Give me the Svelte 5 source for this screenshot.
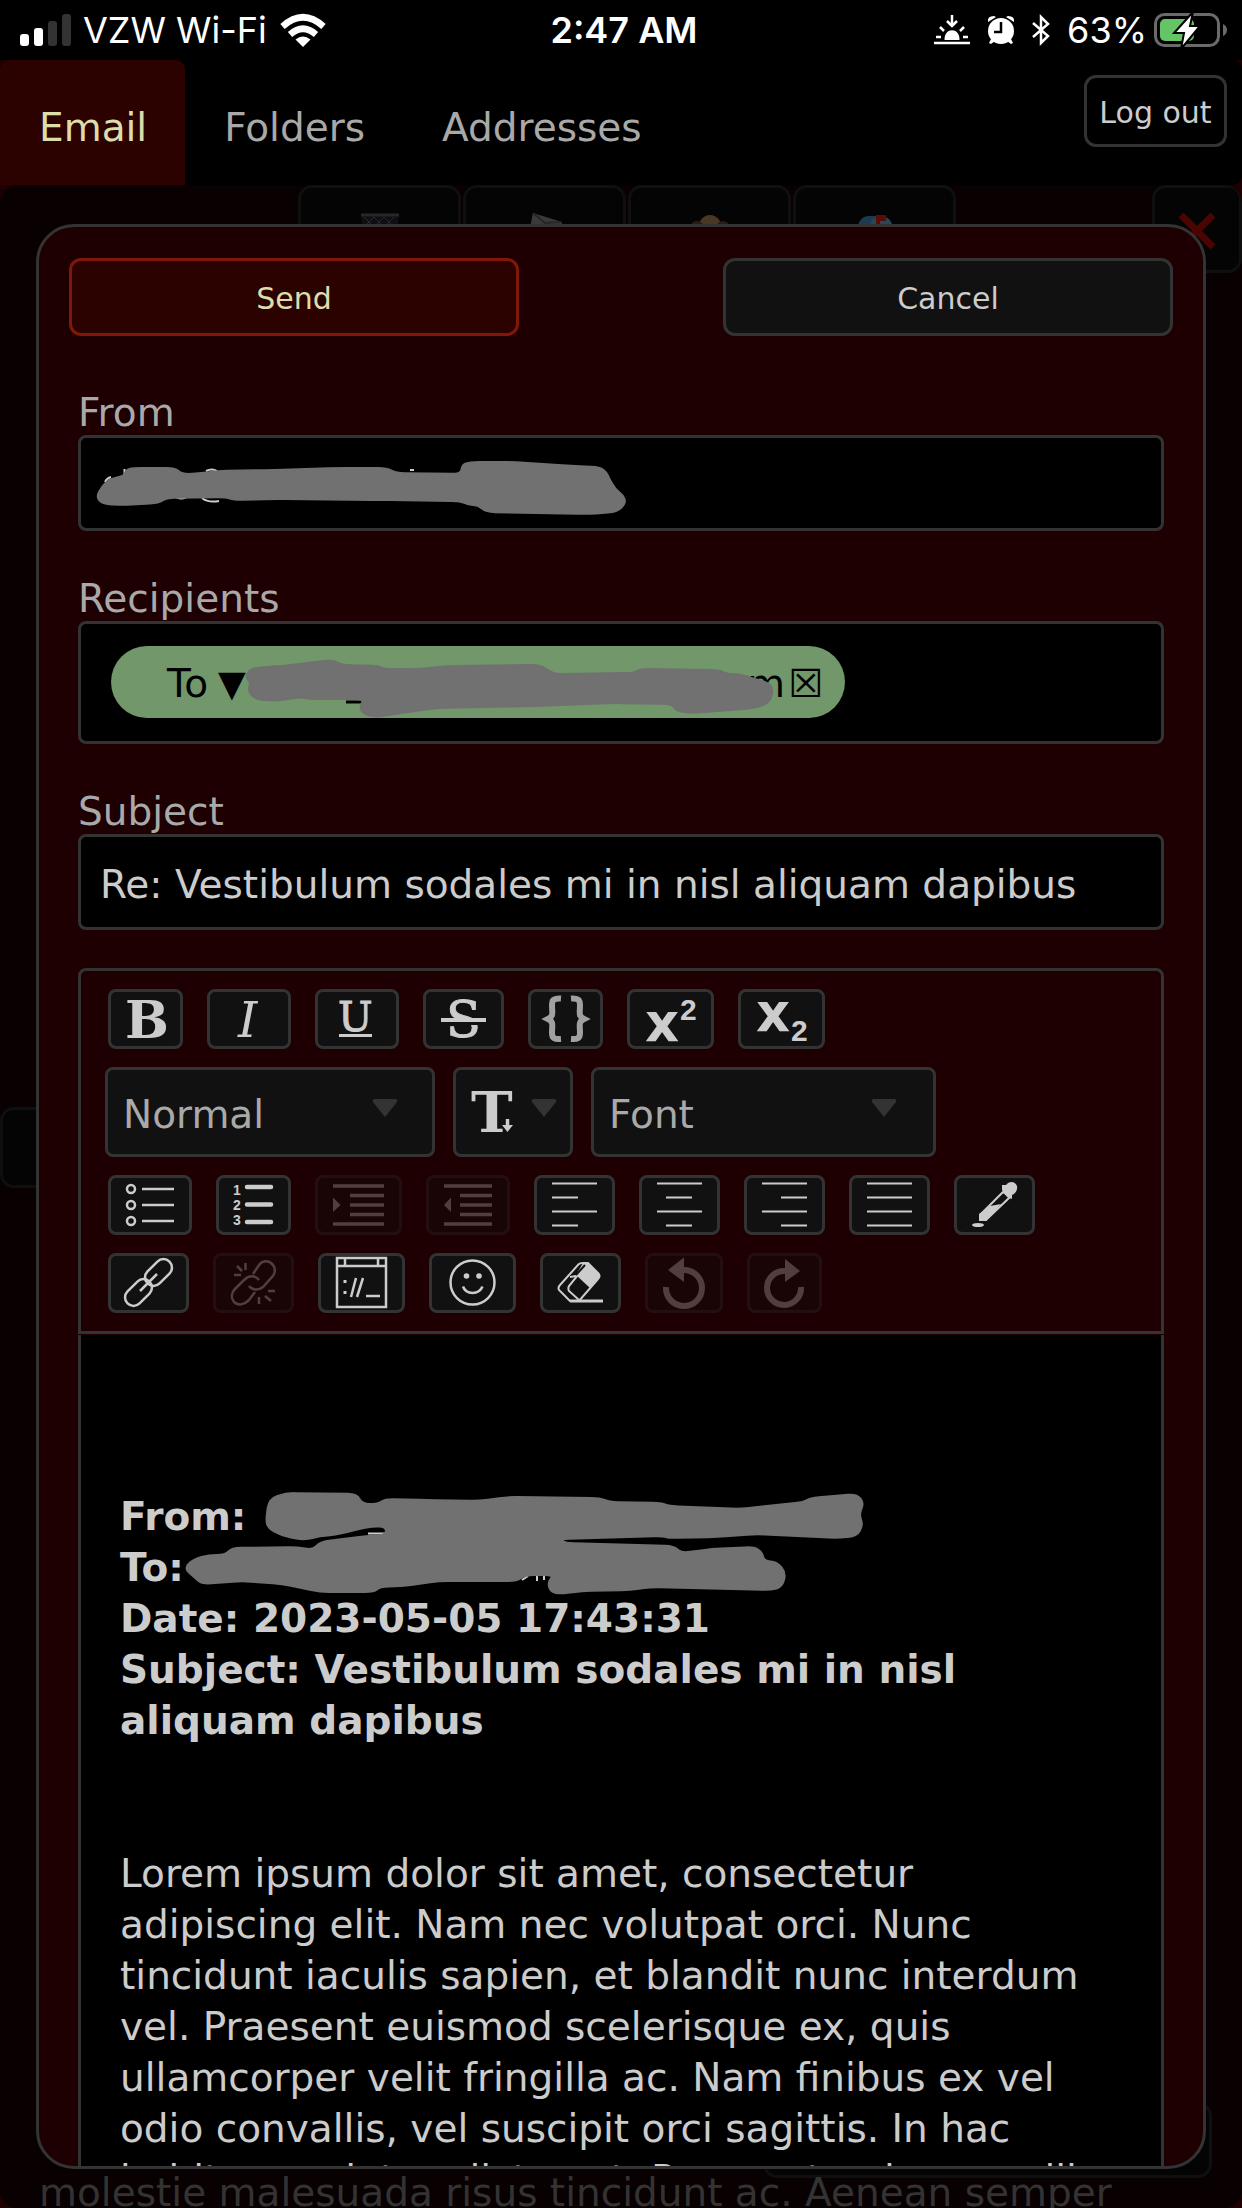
<script>
  const alignLines = (shortX) =>
    `<path d="M18 8.5H63M${shortX} 22.5h26M18 36.5H63M${shortX} 50.5h26" stroke-width="2"/>`;

  // Closed outline through the given points, each corner rounded by up to 9px.
  function outline(source) {
    const n = source.trim().split(/[\s,]+/).map(Number);
    const pts = [];
    for (let i = 0; i < n.length; i += 2) pts.push([n[i], n[i + 1]]);
    const toward = (a, b) => {
      const len = Math.hypot(b[0] - a[0], b[1] - a[1]);
      const t = Math.min(0.5, 9 / len);
      return `${a[0] + (b[0] - a[0]) * t} ${a[1] + (b[1] - a[1]) * t}`;
    };
    return pts
      .map((p, i) => {
        const prev = pts[(i + pts.length - 1) % pts.length];
        const next = pts[(i + 1) % pts.length];
        return `${i ? 'L' : 'M'}${toward(p, prev)}Q${p[0]} ${p[1]} ${toward(p, next)}`;
      })
      .join('') + 'Z';
  }

  const blots = {
    from: outline('96 497 103 485 110 479 124 476 126 470 133 468 175 468 182 474 195 474 218 471 274 470 337 468 387 468 396 473 461 474 462 465 470 462 515 462 571 466 600 467 607 473 609 478 615 489 623 495 626 503 617 512 587 514 486 512 478 505 468 505 461 501 381 500 274 499 234 500 226 497 166 498 159 503 123 505 103 504'),
    recipient: outline('245 676 252 668 282 666 333 660 342 665 379 666 384 669 420 669 448 666 541 665 553 674 634 673 640 669 720 670 726 674 740 674 754 679 769 683 773 690 770 702 756 708 692 713 676 711 672 704 614 703 535 706 436 708 374 717 362 713 360 706 364 699 309 699 302 697 274 701 254 699 248 690 251 683'),
    message: outline('266 1520 269 1499 286 1493 357 1494 362 1504 378 1504 385 1499 427 1500 479 1501 508 1497 600 1498 609 1502 661 1503 669 1506 740 1509 804 1502 810 1498 857 1494 864 1503 859 1514 863 1525 857 1536 838 1538 756 1534 717 1537 669 1538 663 1536 560 1539 565 1543 674 1546 681 1553 712 1549 754 1547 762 1552 764 1561 777 1562 786 1573 782 1587 771 1590 651 1587 630 1590 582 1591 559 1594 550 1591 548 1582 554 1575 525 1575 517 1581 439 1581 404 1586 380 1587 374 1592 320 1592 282 1584 242 1581 202 1584 194 1577 184 1568 194 1559 209 1555 225 1555 232 1548 297 1547 313 1550 320 1542 366 1536 386 1535 386 1527 374 1526 355 1530 335 1535 320 1536 305 1540 282 1536 268 1528')
  };

  const rows = {
    inline: [
      { label: 'Bold', w: 75, icon: '<text x="17" y="49" font-family="DejaVu Serif, serif" font-weight="700" font-size="52">B</text>' },
      { label: 'Italic', w: 84, icon: '<text x="31" y="48" font-family="DejaVu Serif, serif" font-style="italic" font-size="49">I</text>' },
      { label: 'Underline', w: 84, icon: '<text x="23" y="42" font-family="DejaVu Serif, serif" font-size="41" class="heavy">U</text><path d="M24 46.500H57" stroke-width="3"/>' },
      { label: 'Strikethrough', w: 81, icon: '<text x="23" y="48" font-family="DejaVu Serif, serif" font-size="51" class="heavy">S</text><path d="M18 34.500H63" stroke="#111" stroke-width="3"/><path d="M18 31H63" stroke-width="4"/>' },
      { label: 'Code', w: 75, icon: '<path d="M33 9.500C26 9 24 11 24 16C24 24 26 27 20 30C26 33 24 36 24 44C24 49 26 50.500 33 50M43 9.500C50 9 52 11 52 16C52 24 50 27 56 30C50 33 52 36 52 44C52 49 50 50.500 43 50" stroke="#a0a0a0" stroke-width="6"/>' },
      { label: 'Superscript', w: 87, icon: '<text x="18" y="52" font-family="DejaVu Sans, sans-serif" font-weight="700" font-size="53">x</text><text x="53" y="31" font-family="Liberation Sans, sans-serif" font-weight="700" font-size="30">2</text>' },
      { label: 'Subscript', w: 87, icon: '<text x="18" y="42" font-family="DejaVu Sans, sans-serif" font-weight="700" font-size="53">x</text><text x="53" y="52" font-family="Liberation Sans, sans-serif" font-weight="700" font-size="30">2</text>' }
    ],
    block: [
      { label: 'Bulleted list', w: 84, icon: '<circle cx="23" cy="14" r="4"/><circle cx="23" cy="30" r="4"/><circle cx="23" cy="46" r="4"/><path d="M34 14H66M34 30H66M34 46H66"/>' },
      { label: 'Numbered list', w: 75, icon: '<text x="17" y="20" font-family="Liberation Sans, sans-serif" font-weight="700" font-size="14">1</text><text x="17" y="35" font-family="Liberation Sans, sans-serif" font-weight="700" font-size="14">2</text><text x="17" y="50" font-family="Liberation Sans, sans-serif" font-weight="700" font-size="14">3</text><path d="M31 12H55M31 29.500H55M31 47H55" stroke-width="4.500" stroke-linecap="round"/>' },
      { label: 'Indent', w: 87, disabled: true, icon: '<path d="M18 11H69M35 20.500H69M35 30H69M35 39.500H69M18 49H69" stroke-width="3.500"/><path d="M18 22.500L25.500 30L18 37Z" class="solid"/>' },
      { label: 'Outdent', w: 84, disabled: true, icon: '<path d="M18 11H66M34 20.500H66M34 30H66M34 39.500H66M18 49H66" stroke-width="3.500"/><path d="M25 22.500L18 30L25 37Z" class="solid"/>' },
      { label: 'Align left', w: 81, icon: alignLines(18) },
      { label: 'Align center', w: 81, icon: alignLines(27) },
      { label: 'Align right', w: 81, icon: alignLines(37) },
      { label: 'Justify', w: 81, icon: '<path d="M18 8.500H63M18 22.500H63M18 36.500H63M18 50.500H63" stroke-width="2"/>' },
      { label: 'Color picker', w: 81, icon: '<path d="M49 17L26 40V45H32L56 22Z" stroke-width="2"/><path d="M36 31L47 29L32 46H25V39Z" class="solid"/><path d="M48 10L52 10C55 6 61 6 63 11C64 15 61 19 58 20V24L53 22L48 15Z" class="solid"/><ellipse cx="24" cy="50" rx="6" ry="2" class="solid"/>' }
    ],
    insert: [
      { label: 'Insert link', w: 81, icon: '<rect x="-15.500" y="-8.500" width="31" height="17" rx="8.500" transform="translate(30.500 39.500) rotate(-45)"/><rect x="-15.500" y="-8.500" width="31" height="17" rx="8.500" transform="translate(50.500 19.500) rotate(-45)"/><path d="M32 38L49 21"/>' },
      { label: 'Remove link', w: 81, disabled: true, icon: '<path d="M40 21L46 12C50 7 56 7 60 12C63 16 62 21 59 24L50 34C45 38 39 37 36 33"/><path d="M42 39L36 47C31 52 25 53 21 49C18 45 18 40 22 36L31 27C36 22 42 22 46 27"/><path d="M24 13L29 18M32.500 10V17M21 22H28M55 38H62M52 43L58 48M46 44V51" stroke-width="2.500"/>' },
      { label: 'Embed code', w: 87, icon: '<rect x="19" y="5" width="49" height="49"/><path d="M19 13H68M27 5V13M60 5V13M38 25L33 44M45 25L39 44M48 43H62"/><path d="M27 27v3M27 38v3" stroke-width="3"/>' },
      { label: 'Emoji', w: 87, icon: '<circle cx="43.500" cy="29.500" r="22"/><circle cx="37.500" cy="23" r="2.800" class="solid"/><circle cx="50" cy="23" r="2.800" class="solid"/><path d="M34 33.500C37 42 50 42 53.500 33.500"/>' },
      { label: 'Clear formatting', w: 81, icon: '<path d="M30 48L19 37C18 35 18 34 20 32L38 12C39 10 41 10 43 10H48L58 20C60 22 60 24 58 26L39 48Z" stroke-width="2"/><path d="M43 10H48L58 20C60 22 60 24 58 26L50 35L36 22Z" class="solid"/><path d="M46 12L29 33C28 35 28 36 29 38L39 47M36 23L30 24" stroke-width="2"/><path d="M45 12L36 22" stroke="#111" stroke-width="2"/><path d="M30 48H63" stroke-width="3"/>' },
      { label: 'Undo', w: 78, disabled: true, icon: '<path d="M21 34A18 18 0 1 0 39 17" stroke-width="6"/><path d="M23 17L39 4.500V29Z" class="solid"/>' },
      { label: 'Redo', w: 75, disabled: true, icon: '<path d="M54 34A17 17 0 1 1 38 18" stroke-width="6"/><path d="M53 18L38 6V29Z" class="solid"/>' }
    ]
  };

  let subject = $state('Re: Vestibulum sodales mi in nisl aliquam dapibus');
</script>

{#snippet toolRow(tools)}
  <div class="tools">
    {#each tools as t}
      <button type="button" class="tool" aria-label={t.label} disabled={t.disabled}>
        <svg class="icon" width={t.w - 6} height="54" viewBox="3 3 {t.w - 6} 54">{@html t.icon}</svg>
      </button>
    {/each}
  </div>
{/snippet}

{#snippet caret()}
  <svg class="caret" width="26" height="18" viewBox="0 0 26 18"><path d="M3 0H23Q26 0 25 3L13 18L1 3Q0 0 3 0Z" /></svg>
{/snippet}

<div class="screen">
  <header class="status">
    <div class="side">
      <svg width="51" height="32" viewBox="0 0 51 32">
        <rect y="20" width="9" height="12" rx="3" fill="#fff" />
        <rect x="14" y="14" width="9" height="18" rx="3" fill="#fff" />
        <rect x="28" y="7" width="9" height="25" rx="3" fill="#333" />
        <rect x="42" width="9" height="32" rx="3" fill="#333" />
      </svg>
      <span class="carrier">VZW Wi-Fi</span>
      <svg width="46" height="33" viewBox="0 0 46 33" fill="none" stroke="#fff" stroke-width="6.500">
        <path d="M2.500 12.500Q23-6 43.500 12.500" />
        <path d="M10 20.500Q23 9 36 20.500" />
        <path d="M23 33L15.500 25.500Q23 19.500 30.500 25.500Z" fill="#fff" stroke="none" />
      </svg>
    </div>
    <time>2:47 AM</time>
    <div class="side end">
      <svg class="sunset" width="36" height="30" viewBox="0 0 36 30" fill="none" stroke="#fff" stroke-width="2.500">
        <path d="M0 28H36M2 22H7M29 22H34M6 12L10 16M30 12L26 16M18 0V11M13 6L18 11L23 6" />
        <path d="M10.500 25C10 12 26 12 25.500 25Z" fill="#fff" stroke="none" />
      </svg>
      <svg class="alarm" width="28" height="30" viewBox="0 0 28 30">
        <circle cx="14" cy="16" r="13" fill="#fff" />
        <path d="M1 7Q0 1 7 1L9 2ZM27 7Q28 1 21 1L19 2ZM4 24L2 28L4 29L8 26ZM24 24L26 28L24 29L20 26Z" fill="#fff" />
        <path d="M14 7V17H7" fill="none" stroke="#000" stroke-width="2.500" />
      </svg>
      <svg class="bluetooth" width="18" height="30" viewBox="0 0 18 30" fill="none" stroke="#fff" stroke-width="2.500">
        <path d="M1 8L16 21L9 28V2L16 9L1 22" />
      </svg>
      <span>63%</span>
      <svg class="battery" width="74" height="36" viewBox="0 0 74 36">
        <rect x="1.500" y="2.500" width="63" height="31" rx="9" fill="none" stroke="#6a6a6a" stroke-width="3" />
        <path d="M69 12Q73 14 73 18T69 24Z" fill="#6a6a6a" />
        <rect x="6" y="7" width="34" height="22" rx="5" fill="#65c466" />
        <path d="M39 0L20 21H30L27 37L46 14H36Z" fill="#fff" stroke="#000" stroke-width="2" />
      </svg>
    </div>
  </header>

  <nav class="nav">
    <a class="tab active" href="#email">Email</a>
    <a class="tab" href="#folders">Folders</a>
    <a class="tab" href="#addresses">Addresses</a>
    <button class="logout">Log out</button>
  </nav>

  <main class="main">
    <div class="behind" inert>
      <div class="behind-bar">
        <div class="behind-actions">
          <button class="dim" aria-label="Delete">
            <svg width="40" height="60" viewBox="0 0 40 60"><path d="M1 2H39L34 58H6Z" fill="#0e0f12" /><path d="M1 3H39" stroke="#25272b" stroke-width="3" /><path d="M4 5L14 15M14 5L24 15M24 5L34 15M14 5L4 15M24 5L14 15M34 5L24 15" stroke="#2a2a2c" /></svg>
          </button>
          <button class="dim" aria-label="Mark read">
            <svg width="40" height="60" viewBox="0 0 40 60"><path d="M8 1L37 10L32 40L2 30Z" fill="#3a3a3a" /><path d="M8 1L20 11L36 10" fill="none" stroke="#262626" stroke-width="2" /></svg>
          </button>
          <button class="dim" aria-label="Mark spam">
            <svg width="40" height="60" viewBox="0 0 40 60"><ellipse cx="20" cy="20" rx="13" ry="17" fill="#4a3826" /><circle cx="7" cy="16" r="7" fill="#2c1b10" /><circle cx="33" cy="16" r="7" fill="#2c1b10" /></svg>
          </button>
          <button class="dim" aria-label="Move">
            <svg width="40" height="60" viewBox="0 0 40 60"><rect x="3" y="4" width="34" height="26" rx="11" fill="#1c3a52" /><rect x="15" y="5" width="22" height="25" rx="9" fill="#2b4656" /><path d="M21 3H31V9H25V20H21Z" fill="#5a0d06" /></svg>
          </button>
        </div>
        <button class="dim close" aria-label="Close">
          <svg width="38" height="38" viewBox="0 0 38 38"><path d="M3 3L35 35M35 3L3 35" stroke="#4a0502" stroke-width="7" /></svg>
        </button>
      </div>
      <button class="dim side-handle" aria-label="Previous"></button>
      <button class="dim corner-button" aria-label="Reply"></button>
      <p class="behind-text">molestie malesuada risus tincidunt ac. Aenean semper</p>
    </div>

    <form class="dialog" onsubmit={(e) => e.preventDefault()}>
      <div class="actions">
        <button class="action send">Send</button>
        <button class="action" type="button">Cancel</button>
      </div>

      <div class="fields">
        <label for="from">From</label>
        <div class="field">
          <input id="from" type="text" />
          <svg class="ink" width="1080" height="90" viewBox="81 438 1080 90">
            <path class="trace" d="M105 482Q107 478 111 477M124.500 469V474M166 498H170M176 497Q182 500 187 497M202 498Q208 503 219 501M206 471Q212 468 217 471M410 470H414" />
            <path class="blot" d={blots.from} />
          </svg>
        </div>

        <label for="recipients">Recipients</label>
        <div class="field recipients" id="recipients">
          <div class="pill">
            <button type="button" class="plain kind"><span>To</span><span>▼</span></button>
            <span class="domain">m</span>
            <button type="button" class="plain" aria-label="Remove recipient">☒</button>
          </div>
          <svg class="ink" width="1080" height="117" viewBox="81 624 1080 117">
            <path d="M346 702H364" stroke="#000" stroke-width="3" />
            <path class="blot" d={blots.recipient} />
          </svg>
        </div>

        <label for="subject">Subject</label>
        <div class="field"><input id="subject" type="text" bind:value={subject} /></div>

        <div class="toolbar">
          {@render toolRow(rows.inline)}
          <div class="pickers">
            <div class="picker block-type">
              <select aria-label="Block type"><option>Normal</option></select>
              {@render caret()}
            </div>
            <button type="button" class="picker size" aria-label="Font size" aria-haspopup="listbox">
              <svg class="icon" width="60" height="84" viewBox="3 3 60 84">
                <text x="18" y="65" font-family="DejaVu Serif, serif" font-weight="700" font-size="56">T</text>
                <path d="M54.500 52V60" stroke-width="3.500" />
                <path d="M49 58H60L54.500 65Z" class="solid" />
              </svg>
              {@render caret()}
            </button>
            <div class="picker family">
              <select aria-label="Font"><option>Font</option></select>
              {@render caret()}
            </div>
          </div>
          {@render toolRow(rows.block)}
          {@render toolRow(rows.insert)}
        </div>

        <div class="body" contenteditable="true" role="textbox" aria-label="Message" aria-multiline="true" tabindex="0">
          <p class="quoted">From:<br />To:<br />Date: 2023-05-05 17:43:31<br />Subject: Vestibulum sodales mi in nisl aliquam dapibus</p>
          <p>Lorem ipsum dolor sit amet, consectetur adipiscing elit. Nam nec volutpat orci. Nunc tincidunt iaculis sapien, et blandit nunc interdum vel. Praesent euismod scelerisque ex, quis ullamcorper velit fringilla ac. Nam finibus ex vel odio convallis, vel suscipit orci sagittis. In hac habitasse platea dictumst. Praesent quis convallis</p>
          <svg class="ink" width="1080" height="300" viewBox="81 1335 1080 300">
            <path class="trace" d="M368 1533.500H385M522 1580L528 1576M537 1575V1581M544 1575V1580" />
            <path class="blot" d={blots.message} />
          </svg>
        </div>
      </div>
    </form>
  </main>
</div>

<style>
  :global(body) {
    background: #1e0002;
  }
  .screen {
    height: 100vh;
    display: flex;
    flex-direction: column;
    overflow: hidden;
    font: 39px/51px "DejaVu Sans", Verdana, sans-serif;
    color: #ccc;
  }
  .screen :is(button, input, select) {
    font: inherit;
    color: inherit;
    box-sizing: border-box;
    margin: 0;
    padding: 0;
  }
  svg {
    display: block;
    flex: none;
    overflow: visible;
  }

  .status {
    flex: none;
    height: 60px;
    display: grid;
    grid-template-columns: 1fr auto 1fr;
    align-items: center;
    padding: 0 14px 0 20px;
    background: #000;
    color: #fff;
    font: 36px/60px Inter, sans-serif;
  }
  .status time {
    font-weight: 600;
  }
  .side {
    display: flex;
    align-items: center;
  }
  .carrier {
    margin: 0 13px 0 12px;
  }
  .end {
    justify-content: flex-end;
  }
  .sunset, .alarm, .bluetooth {
    margin-right: 17px;
  }
  .battery {
    margin-left: 7px;
  }

  .nav {
    flex: none;
    height: 125px;
    display: flex;
    align-items: stretch;
    background: #000;
    border-radius: 9px;
  }
  .tab {
    display: flex;
    align-items: center;
    padding: 9px 38px 0 39px;
    color: #a9a9a9;
    text-decoration: none;
  }
  .active {
    background: #2b0200;
    color: #dda;
    border-radius: 9px 9px 0 0;
  }
  .screen .logout {
    margin: 15px 15px 0 auto;
    padding-top: 2px;
    width: 143px;
    height: 72px;
    border: 3px solid #333;
    border-radius: 12px;
    background: #000;
    font-size: 30px;
  }

  .main {
    flex: 1;
    position: relative;
    min-height: 0;
  }
  .behind {
    height: 100%;
    position: relative;
    background: #080001;
    border-radius: 18px;
    overflow: hidden;
  }
  .behind-bar {
    display: flex;
    justify-content: space-between;
    padding-left: 298px;
  }
  .behind-actions {
    display: flex;
    gap: 2px;
  }
  .dim {
    width: 163px;
    height: 88px;
    display: flex;
    justify-content: center;
    border: 3px solid #0f0f0f;
    border-radius: 14px;
    background: #040404;
  }
  .screen .behind-bar .dim {
    padding-top: 24px;
  }
  .behind-bar .close {
    width: 90px;
  }
  .side-handle {
    position: absolute;
    left: 0;
    top: 922px;
    height: 81px;
  }
  .corner-button {
    position: absolute;
    right: 30px;
    bottom: 30px;
    width: 449px;
    height: 76px;
  }
  .behind-text {
    position: absolute;
    left: 39px;
    bottom: -10px;
    margin: 0;
    color: #333;
    white-space: nowrap;
  }

  .dialog {
    position: absolute;
    inset: 39px 36px;
    display: flex;
    flex-direction: column;
    box-sizing: border-box;
    padding: 31px 30px 0;
    border: 3px solid #333;
    border-radius: 38px;
    background: #1e0002;
    overflow: hidden;
  }
  .actions {
    flex: none;
    display: flex;
    justify-content: space-between;
    gap: 24px;
  }
  .action {
    flex: 0 1 450px;
    height: 78px;
    border: 3px solid #333;
    border-radius: 12px;
    background: #111;
  }
  .screen .action {
    padding-top: 2px;
    font-size: 30px;
  }
  .screen .send {
    border-color: #81160b;
    background: #2b0200;
    color: #dda;
  }

  .fields {
    flex: 1;
    min-height: 0;
    display: flex;
    flex-direction: column;
    padding: 54px 9px 0;
  }
  label {
    flex: none;
    line-height: 45px;
    color: #a9a9a9;
  }
  .field {
    flex: none;
    position: relative;
    margin-bottom: 45px;
    border: 3px solid #333;
    border-radius: 8px;
    background: #000;
  }
  .screen .field input {
    display: block;
    width: 100%;
    height: 90px;
    padding: 4px 19px 0;
    border: 0;
    background: none;
    outline: none;
  }
  .recipients {
    height: 117px;
  }
  .pill {
    display: flex;
    align-items: center;
    box-sizing: border-box;
    width: 734px;
    height: 72px;
    margin: 22px 30px;
    padding: 2px 22px 0 56px;
    border-radius: 36px;
    background: #71976b;
    color: #000;
  }
  .plain {
    border: 0;
    background: none;
  }
  .kind {
    display: flex;
    gap: 10px;
  }
  .kind span + span {
    font-size: 36px;
  }
  .domain {
    margin-left: auto;
    margin-right: 3px;
  }
  .ink {
    position: absolute;
    left: 0;
    top: 0;
    pointer-events: none;
  }
  .blot {
    fill: #717171;
    stroke: #717171;
    stroke-width: 2;
    stroke-linejoin: round;
  }
  .trace {
    fill: none;
    stroke: #ccc;
    stroke-width: 2;
  }

  .toolbar {
    flex: none;
    display: flex;
    flex-direction: column;
    gap: 18px;
    margin-top: -7px;
    padding: 18px 24px;
    border: 3px solid #333;
    border-radius: 8px 8px 0 0;
  }
  .tools {
    display: flex;
    flex-wrap: wrap;
    gap: 24px;
    padding: 0 3px;
  }
  .tool, .picker {
    border: 3px solid #333;
    border-radius: 8px;
    background: #111;
  }
  .tool:disabled {
    opacity: 0.3;
  }
  .icon {
    fill: none;
    stroke: #ccc;
    stroke-width: 2.5;
  }
  .icon :global(text) {
    fill: #ccc;
    stroke: none;
  }
  .icon :global(.heavy) {
    stroke: #ccc;
    stroke-width: 1;
  }
  .icon :global(.solid) {
    fill: #ccc;
    stroke: none;
  }
  .pickers {
    display: flex;
    gap: 18px;
  }
  .picker {
    position: relative;
    height: 90px;
    box-sizing: border-box;
    color: #a9a9a9;
  }
  .screen .picker select {
    width: 100%;
    height: 84px;
    padding: 4px 15px 0;
    appearance: none;
    border: 0;
    background: none;
    outline: none;
  }
  .caret {
    position: absolute;
    right: 34px;
    top: 29px;
    fill: #333;
    pointer-events: none;
  }
  .block-type {
    width: 330px;
  }
  .size {
    width: 120px;
  }
  .size .caret {
    right: 13px;
  }
  .family {
    width: 345px;
  }
  .family .caret {
    right: 36px;
  }

  .body {
    flex: 1;
    min-height: 0;
    position: relative;
    margin-top: 1px;
    padding: 156px 48px 0 39px;
    border: solid #333;
    border-width: 0 3px;
    background: #000;
    overflow: hidden;
    outline: none;
  }
  .body p {
    margin: 0;
  }
  .body .quoted {
    margin-bottom: 102px;
    font-weight: 700;
  }
</style>
